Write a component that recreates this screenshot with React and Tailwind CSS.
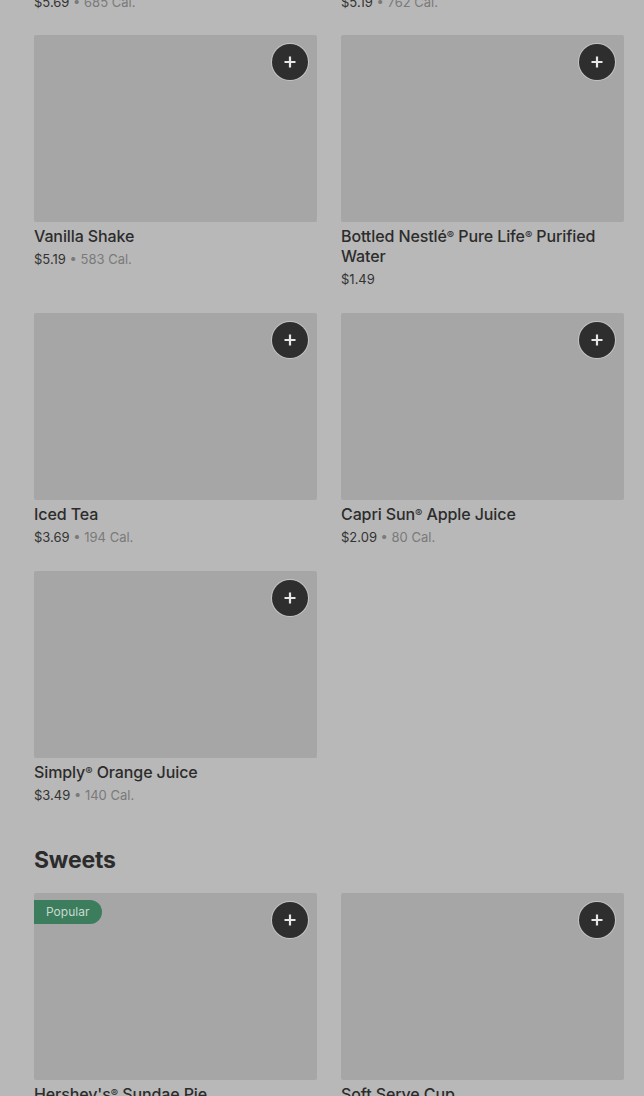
import React from "react";

const drinks = [
  { name: "Vanilla Shake", price: "$5.19", cal: "583 Cal." },
  { name: "Bottled Nestlé® Pure Life® Purified Water", price: "$1.49" },
  { name: "Iced Tea", price: "$3.69", cal: "194 Cal." },
  { name: "Capri Sun® Apple Juice", price: "$2.09", cal: "80 Cal." },
  { name: "Simply® Orange Juice", price: "$3.49", cal: "140 Cal." },
];

const sweets = [
  { name: "Hershey's® Sundae Pie", price: "$2.79", cal: "300 Cal.", popular: true },
  { name: "Soft Serve Cup", price: "$1.89", cal: "220 Cal." },
];

function PlusIcon() {
  return (
    <svg width="14" height="14" viewBox="0 0 14 14" fill="none">
      <path d="M7 1.5v11M1.5 7h11" stroke="#e6e6e6" strokeWidth="2.2" />
    </svg>
  );
}

// smaller ® marks, like the reference
function Name({ text }) {
  const parts = text.split("®");
  return parts.map((p, i) => (
    <React.Fragment key={i}>
      {p}
      {i < parts.length - 1 && (
        <span className="text-[11px] leading-[0] relative -top-[3px]">®</span>
      )}
    </React.Fragment>
  ));
}

function ItemCard({ item }) {
  return (
    <div className="flex flex-col">
      <div className="relative h-[187px] bg-[#a6a6a6] rounded-[2px]">
        {item.popular && (
          <div className="absolute left-0 top-[7px] h-[24px] pl-[12px] pr-[13px] flex items-center bg-[#3b7d5c] rounded-r-full text-[12px] text-[#c9d9d0]">
            Popular
          </div>
        )}
        <button className="absolute right-[9px] top-[9px] w-[36px] h-[36px] rounded-full bg-[#2e2e2e] ring-1 ring-[#c4c4c4] flex items-center justify-center">
          <PlusIcon />
        </button>
      </div>
      <div className="mt-[4px] text-[16px] leading-[20px] font-medium tracking-[-0.1px] text-[#2c2c2c]">
        <Name text={item.name} />
      </div>
      <div className="mt-[4px] text-[13px] leading-[18px] text-[#333]">
        {item.price}
        {item.cal && (
          <span className="text-[#7a7a7a]">
            {" • "}
            {item.cal}
          </span>
        )}
      </div>
    </div>
  );
}

export default function App() {
  return (
    <div
      className="min-h-[1096px] bg-[#b8b8b8] overflow-hidden pl-[34px] pr-[20px]"
      style={{ fontFamily: "Inter, 'Noto Sans', sans-serif" }}
    >
      <div className="-mt-[7px] text-[13px] leading-[18px] text-[#333] grid grid-cols-2 gap-x-[24px]">
        <div>
          $5.69<span className="text-[#7a7a7a]"> • 685 Cal.</span>
        </div>
        <div>
          $5.19<span className="text-[#7a7a7a]"> • 762 Cal.</span>
        </div>
      </div>
      <div className="mt-[24px] grid grid-cols-2 gap-x-[24px] gap-y-[25px]">
        {drinks.map((d) => (
          <ItemCard key={d.name} item={d} />
        ))}
      </div>
      <h2 className="mt-[40px] text-[23px] leading-[32px] font-bold tracking-[-0.2px] text-[#2c2c2c]">
        Sweets
      </h2>
      <div className="mt-[17px] grid grid-cols-2 gap-x-[24px] gap-y-[25px]">
        {sweets.map((d) => (
          <ItemCard key={d.name} item={d} />
        ))}
      </div>
    </div>
  );
}
